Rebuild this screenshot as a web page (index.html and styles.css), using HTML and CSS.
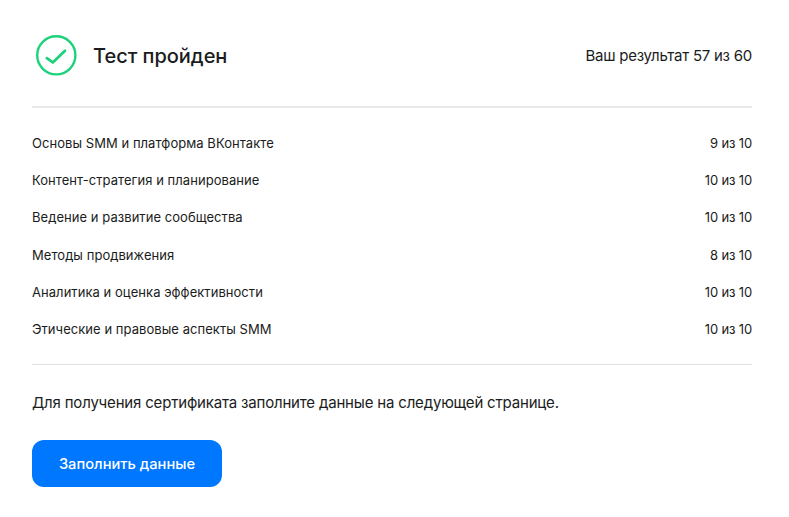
FILE: index.html
```html
<!DOCTYPE html>
<html lang="ru">
<head>
<meta charset="utf-8">
<title>Тест пройден</title>
<link rel="stylesheet" href="styles.css">
</head>
<body>
<main class="card">
  <header class="head">
    <div class="status">
      <svg class="check" width="41" height="41" viewBox="0 0 41 41" fill="none">
        <circle cx="20.3" cy="20.3" r="19.1" stroke="#1ed27c" stroke-width="2.4"/>
        <path d="M10.800 23.200l6 4.200L29 15.700" stroke="#1ed27c" stroke-width="2.800" stroke-linecap="round" stroke-linejoin="round"/>
      </svg>
      <h1 class="title">Тест пройден</h1>
    </div>
    <div class="total">Ваш результат 57 из 60</div>
  </header>
  <ul class="rows">
    <li class="row"><span class="name">Основы SMM и платформа ВКонтакте</span><span class="score">9 из 10</span></li>
    <li class="row"><span class="name">Контент-стратегия и планирование</span><span class="score">10 из 10</span></li>
    <li class="row"><span class="name">Ведение и развитие сообщества</span><span class="score">10 из 10</span></li>
    <li class="row"><span class="name">Методы продвижения</span><span class="score">8 из 10</span></li>
    <li class="row"><span class="name">Аналитика и оценка эффективности</span><span class="score">10 из 10</span></li>
    <li class="row"><span class="name">Этические и правовые аспекты SMM</span><span class="score">10 из 10</span></li>
  </ul>
  <p class="note">Для получения сертификата заполните данные на следующей странице.</p>
  <button class="cta">Заполнить данные</button>
</main>
</body>
</html>
```
FILE: styles.css
```css
* { box-sizing: border-box; }
html, body { margin: 0; background: #fff; }
body { font-family: Inter, "Noto Sans", sans-serif; color: #1a1c20; }
.card { width: 789px; height: 517px; padding: 35px 37px 0 32px; }
.head {
  display: flex; justify-content: space-between; align-items: center;
  height: 73px; padding-bottom: 30px; border-bottom: 2px solid #e8e8e8;
}
.status { display: flex; align-items: center; gap: 16px; padding-left: 4px; }
.check { display: block; }
.title { margin: 0; font-size: 20px; font-weight: 500; letter-spacing: -0.03px; }
.total { font-size: 15px; letter-spacing: -0.25px; }
.rows { list-style: none; margin: 0; padding: 16px 0 16.300px; border-bottom: 1px solid #e0e0e0; }
.row {
  display: flex; justify-content: space-between; align-items: center;
  height: 37.350px; font-size: 13px;
}
.name { letter-spacing: 0.05px; }
.score { letter-spacing: -0.15px; }
.note { margin: 28px 0 0; font-size: 15px; line-height: 20px; letter-spacing: -0.18px; }
.cta {
  display: block; margin-top: 27px; width: 190px; height: 47px;
  border: 0; border-radius: 12px; background: #0077ff; color: #fff;
  font: 500 14.7px Inter, "Noto Sans", sans-serif;
}
```
